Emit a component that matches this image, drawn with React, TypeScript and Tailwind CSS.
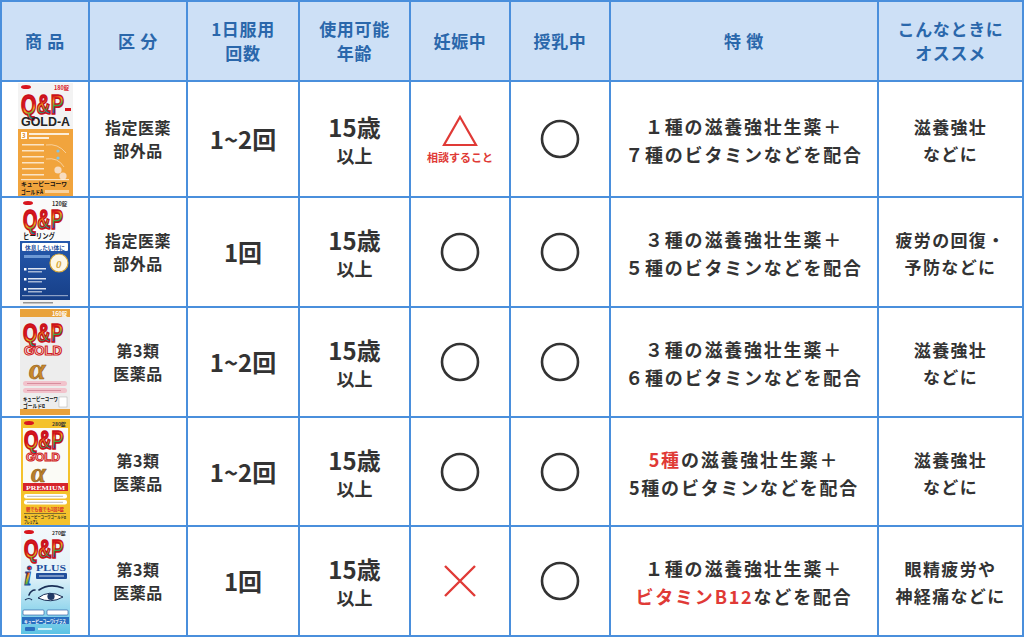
import React from "react";

const RED = "#e03a36";

// Q&P logo: condensed tall letters, squeezed with a transform so the box stays inside the pack
function QP({ x, y, w, size }: { x: number; y: number; w: number; size: number }) {
  const sx = w / (2.17 * size);
  return (
    <g transform={`translate(${x} ${y}) scale(${sx.toFixed(3)} 1)`}>
      <text
        x={0}
        y={0}
        fontSize={size}
        fontWeight={700}
        fontFamily="'Liberation Sans', Arial, sans-serif"
        fill="url(#rainbow)"
        stroke="#c8101a"
        strokeWidth={1.6}
      >
        Q&amp;P
      </text>
    </g>
  );
}

function Defs() {
  return (
    <defs>
      <linearGradient id="rainbow" x1="0" y1="0" x2="0.5" y2="1">
        <stop offset="0" stopColor="#d8151d" />
        <stop offset="0.5" stopColor="#d8151d" />
        <stop offset="0.62" stopColor="#f6b51a" />
        <stop offset="0.76" stopColor="#3aa84a" />
        <stop offset="0.9" stopColor="#1d5fb8" />
      </linearGradient>
      <linearGradient id="sky" x1="0" y1="0" x2="0" y2="1">
        <stop offset="0" stopColor="#f3f8fb" />
        <stop offset="0.45" stopColor="#e3f2f9" />
        <stop offset="1" stopColor="#5cc3e4" />
      </linearGradient>
      <linearGradient id="navy" x1="0" y1="0" x2="0" y2="1">
        <stop offset="0" stopColor="#2559ad" />
        <stop offset="1" stopColor="#173f87" />
      </linearGradient>
    </defs>
  );
}

const jp = "'Noto Sans CJK JP', sans-serif";

function GoldA() {
  return (
    <svg width="55" height="113" viewBox="0 0 55 113">
      <Defs />
      <rect width="55" height="113" fill="#f1a43d" />
      <rect width="55" height="46" fill="#f3f3f3" />
      <ellipse cx="8" cy="4" rx="5" ry="2" fill="#d8151d" />
      <text x="36" y="7" fontSize="5.5" fontWeight={700} fill="#d8151d" fontFamily={jp}>180錠</text>
      <QP x={3} y={31} w={43} size={28} />
      <rect x="47" y="25" width="6" height="3" fill="#d8151d" />
      <text x="3" y="43" fontSize="12" fontWeight={700} fill="#222" fontFamily="'Liberation Sans', sans-serif" textLength="49" lengthAdjust="spacingAndGlyphs">GOLD-A</text>
      <rect x="3" y="49" width="6" height="7" fill="#fff" />
      <text x="4" y="55" fontSize="6" fontWeight={700} fill="#e08a1a" fontFamily={jp}>3</text>
      <rect x="11" y="50" width="40" height="2" fill="#fff" opacity="0.8" />
      <rect x="11" y="54" width="20" height="2" fill="#fff" opacity="0.8" />
      {[61, 67, 73, 79, 85, 91].map((yy) => (
        <rect key={yy} x="4" y={yy} width="22" height="1.5" fill="#fff" opacity="0.7" />
      ))}
      <path d="M28 62 Q40 60 48 70 M28 76 Q40 74 46 84" stroke="#fff" strokeWidth="0.6" fill="none" opacity="0.8" />
      <circle cx="40" cy="68" r="1.6" fill="#7ec3e8" />
      <circle cx="40" cy="75" r="1.6" fill="#7ec3e8" />
      <circle cx="40" cy="87" r="3.6" fill="#f7dcc0" />
      <circle cx="45" cy="93" r="3.6" fill="#f7dcc0" />
      <rect x="3" y="96" width="48" height="1.2" fill="#fff" opacity="0.7" />
      <text x="3" y="103" fontSize="6" fontWeight={700} fill="#111" fontFamily={jp} textLength="46" lengthAdjust="spacingAndGlyphs">キューピーコーワ</text>
      <text x="3" y="110.5" fontSize="6" fontWeight={700} fill="#111" fontFamily={jp} textLength="22" lengthAdjust="spacingAndGlyphs">ゴールドA</text>
      <rect x="27" y="107" width="24" height="3" fill="#fff" opacity="0.5" />
    </svg>
  );
}

function Healing() {
  return (
    <svg width="50" height="107" viewBox="0 0 50 107">
      <Defs />
      <rect width="50" height="107" fill="#fafafa" />
      <ellipse cx="8" cy="4" rx="5" ry="2" fill="#d8151d" />
      <text x="32" y="7" fontSize="5.5" fontWeight={700} fill="#333" fontFamily={jp}>120錠</text>
      <QP x={3} y={30} w={40} size={27} />
      <text x="3" y="39.5" fontSize="7.5" fontWeight={700} fill="#1a1a1a" fontFamily={jp} textLength="32" lengthAdjust="spacingAndGlyphs">ヒーリング</text>
      <rect y="42" width="50" height="59" fill="url(#navy)" />
      <rect x="2" y="44" width="46" height="8" rx="1" fill="#fff" />
      <text x="5" y="50.5" fontSize="6" fontWeight={700} fill="#1f4e9c" fontFamily={jp} textLength="40" lengthAdjust="spacingAndGlyphs">休息したい体に</text>
      <rect x="4" y="56" width="26" height="3" fill="#8fb6e8" opacity="0.7" />
      <circle cx="39" cy="64" r="9" fill="#fdf7e6" stroke="#d8a83a" strokeWidth="1.2" />
      <text x="36" y="69" fontSize="11" fontStyle="italic" fontWeight={700} fill="#d8a83a" fontFamily="'Liberation Serif', serif">0</text>
      {[69, 79, 89].map((yy) => (
        <g key={yy}>
          <rect x="4" y={yy} width="2.5" height="2.5" fill="#fff" />
          <rect x="8" y={yy} width="18" height="1.5" fill="#fff" opacity="0.85" />
          <rect x="8" y={yy + 3} width="14" height="1.5" fill="#fff" opacity="0.6" />
        </g>
      ))}
      <rect x="2" y="96" width="46" height="1.2" fill="#fff" opacity="0.5" />
      <rect y="101" width="50" height="6" fill="#f1f1f1" />
      <rect x="3" y="103" width="30" height="1.5" fill="#555" opacity="0.6" />
    </svg>
  );
}

function GoldAlpha() {
  return (
    <svg width="50" height="106" viewBox="0 0 50 106">
      <Defs />
      <rect width="50" height="106" fill="#ededed" />
      <rect width="50" height="8" fill="#e9a23b" />
      <rect y="100" width="50" height="6" fill="#e9a23b" />
      <text x="32" y="6.5" fontSize="5.5" fontWeight={700} fill="#fff" fontFamily={jp}>160錠</text>
      <QP x={3} y={33} w={40} size={26} />
      <text x="4" y="46" fontSize="13" fontWeight={700} fill="#fff" stroke="#d01e24" strokeWidth="1.1" fontFamily="'Liberation Sans', sans-serif" textLength="38" lengthAdjust="spacingAndGlyphs">GOLD</text>
      <text x="9" y="70" fontSize="30" fontStyle="italic" fontWeight={700} fill="#c7892d" stroke="#8f5b1a" strokeWidth="0.6" fontFamily="'Liberation Serif', serif">α</text>
      <rect x="3" y="72" width="44" height="5" rx="2.5" fill="#f2c3cc" />
      <rect x="3" y="79" width="44" height="5" rx="2.5" fill="#f2c3cc" />
      <rect x="7" y="74" width="34" height="1" fill="#c56a80" opacity="0.6" />
      <rect x="7" y="81" width="34" height="1" fill="#c56a80" opacity="0.6" />
      <text x="3" y="92" fontSize="5.5" fontWeight={700} fill="#111" fontFamily={jp} textLength="35" lengthAdjust="spacingAndGlyphs">キューピーコーワ</text>
      <text x="3" y="98.5" fontSize="5.5" fontWeight={700} fill="#111" fontFamily={jp} textLength="22" lengthAdjust="spacingAndGlyphs">ゴールドα</text>
      <rect x="39" y="88" width="8" height="10" fill="#fff" stroke="#999" strokeWidth="0.4" />
    </svg>
  );
}

function Premium() {
  return (
    <svg width="49" height="106" viewBox="0 0 49 106">
      <Defs />
      <rect width="49" height="106" fill="#f4c22c" />
      <rect x="2" y="9" width="45" height="56" fill="#fbfbf6" />
      <ellipse cx="8" cy="4" rx="5" ry="2" fill="#d8151d" />
      <text x="31" y="7" fontSize="5" fontWeight={700} fill="#333" fontFamily={jp}>280錠</text>
      <QP x={3} y={30} w={40} size={25} />
      <text x="5" y="42" fontSize="11" fontWeight={700} fill="#fff" stroke="#d01e24" strokeWidth="1" fontFamily="'Liberation Sans', sans-serif" textLength="34" lengthAdjust="spacingAndGlyphs">GOLD</text>
      <text x="10" y="63" fontSize="27" fontStyle="italic" fontWeight={700} fill="#b9812b" stroke="#8f5b1a" strokeWidth="0.6" fontFamily="'Liberation Serif', serif">α</text>
      <rect x="2" y="64" width="45" height="8" fill="#d6242b" />
      <text x="5" y="70.5" fontSize="6.5" fontWeight={700} fill="#fff" fontFamily="'Liberation Serif', serif" textLength="39" lengthAdjust="spacingAndGlyphs">PREMIUM</text>
      <rect x="3" y="75" width="43" height="4.5" rx="2" fill="#fff" />
      <rect x="3" y="81" width="43" height="4.5" rx="2" fill="#fff" />
      <rect x="6" y="76.8" width="36" height="1" fill="#888" opacity="0.6" />
      <rect x="6" y="82.8" width="36" height="1" fill="#888" opacity="0.6" />
      <text x="5" y="91.5" fontSize="4.5" fontWeight={700} fill="#d6242b" fontFamily={jp} textLength="38" lengthAdjust="spacingAndGlyphs">朝でも夜でも1回1錠</text>
      <rect x="3" y="94" width="42" height="1" fill="#333" opacity="0.6" />
      <text x="3" y="99.5" fontSize="4" fontWeight={700} fill="#222" fontFamily={jp} textLength="42" lengthAdjust="spacingAndGlyphs">キューピーコーワゴールドα</text>
      <text x="3" y="104.5" fontSize="4" fontWeight={700} fill="#222" fontFamily={jp} textLength="14" lengthAdjust="spacingAndGlyphs">プレミアム</text>
    </svg>
  );
}

function IPlus() {
  return (
    <svg width="49" height="106" viewBox="0 0 49 106">
      <Defs />
      <rect width="49" height="106" fill="url(#sky)" />
      <ellipse cx="8" cy="4" rx="5" ry="2" fill="#d8151d" />
      <text x="31" y="7" fontSize="5" fontWeight={700} fill="#333" fontFamily={jp}>270錠</text>
      <QP x={3} y={30} w={40} size={25} />
      <text x="3" y="57" fontSize="27" fontStyle="italic" fontWeight={700} fill="url(#rainbow)" stroke="#1d4f9e" strokeWidth="0.9" fontFamily="'Liberation Serif', serif">i</text>
      <text x="15" y="43" fontSize="9" fontWeight={700} fill="#1f4e9c" fontFamily="'Liberation Serif', serif" textLength="30" lengthAdjust="spacingAndGlyphs">PLUS</text>
      <rect x="15" y="45" width="31" height="6" rx="1" fill="#1f4e9c" />
      <rect x="18" y="47.5" width="25" height="1" fill="#fff" opacity="0.8" />
      <path d="M8 67 Q10 62 14 62 M18 62 Q28 55 42 60" stroke="#1b2f57" strokeWidth="1.6" fill="none" strokeLinecap="round" />
      <path d="M17 70 Q28 61 42 69 Q30 76 17 70 Z" fill="#fff" stroke="#1b2f57" strokeWidth="1" />
      <circle cx="30" cy="68.5" r="3.6" fill="#223a66" />
      <path d="M4 72 Q8 69 11 72" stroke="#1b2f57" strokeWidth="1.2" fill="none" />
      <rect x="2" y="82" width="21" height="5" rx="1" fill="#fff" stroke="#1f4e9c" strokeWidth="0.6" />
      <rect x="26" y="82" width="21" height="5" rx="1" fill="#fff" stroke="#1f4e9c" strokeWidth="0.6" />
      <rect x="1" y="89" width="47" height="7" fill="#2a6fc0" />
      <text x="3" y="94.5" fontSize="4.5" fontWeight={700} fill="#fff" fontFamily={jp} textLength="42" lengthAdjust="spacingAndGlyphs">キューピーコーワiプラス</text>
      <rect x="4" y="99" width="10" height="4" rx="1" fill="#2a6fc0" />
      <rect x="17" y="100" width="14" height="2" fill="#fff" opacity="0.7" />
    </svg>
  );
}

type Row = {
  img: React.ReactNode;
  kind: [string, string];
  times: string;
  preg: "tri" | "ok" | "ng";
  feature: React.ReactNode;
  rec: [string, string];
};

const rows: Row[] = [
  {
    img: <GoldA />,
    kind: ["指定医薬", "部外品"],
    times: "1~2回",
    preg: "tri",
    feature: (
      <>
        <span className="block">１種の滋養強壮生薬＋</span>
        <span className="block">７種のビタミンなどを配合</span>
      </>
    ),
    rec: ["滋養強壮", "などに"],
  },
  {
    img: <Healing />,
    kind: ["指定医薬", "部外品"],
    times: "1回",
    preg: "ok",
    feature: (
      <>
        <span className="block">３種の滋養強壮生薬＋</span>
        <span className="block">５種のビタミンなどを配合</span>
      </>
    ),
    rec: ["疲労の回復・", "予防などに"],
  },
  {
    img: <GoldAlpha />,
    kind: ["第3類", "医薬品"],
    times: "1~2回",
    preg: "ok",
    feature: (
      <>
        <span className="block">３種の滋養強壮生薬＋</span>
        <span className="block">６種のビタミンなどを配合</span>
      </>
    ),
    rec: ["滋養強壮", "などに"],
  },
  {
    img: <Premium />,
    kind: ["第3類", "医薬品"],
    times: "1~2回",
    preg: "ok",
    feature: (
      <>
        <span className="block">
          <span className="text-[#e03a36]">5種</span>の滋養強壮生薬＋
        </span>
        <span className="block">5種のビタミンなどを配合</span>
      </>
    ),
    rec: ["滋養強壮", "などに"],
  },
  {
    img: <IPlus />,
    kind: ["第3類", "医薬品"],
    times: "1回",
    preg: "ng",
    feature: (
      <>
        <span className="block">１種の滋養強壮生薬＋</span>
        <span className="block">
          <span className="text-[#e03a36]">ビタミンB12</span>などを配合
        </span>
      </>
    ),
    rec: ["眼精疲労や", "神経痛などに"],
  },
];

function Circle() {
  return (
    <svg width="40" height="40" viewBox="0 0 40 40">
      <circle cx="20" cy="20" r="18" fill="none" stroke="#333" strokeWidth="2.6" />
    </svg>
  );
}

function Triangle() {
  return (
    <div className="flex flex-col items-center">
      <svg width="36" height="32" viewBox="0 0 36 32">
        <path d="M18 2 L34 30 L2 30 Z" fill="none" stroke={RED} strokeWidth="2.2" />
      </svg>
      <span className="mt-[3px] text-[11px] leading-[14px] font-bold text-[#e03a36]">相談すること</span>
    </div>
  );
}

function Cross() {
  return (
    <svg width="34" height="34" viewBox="0 0 34 34">
      <path d="M2 2 L32 32 M32 2 L2 32" stroke={RED} strokeWidth="2.4" />
    </svg>
  );
}

function Head({ children }: { children: React.ReactNode }) {
  return (
    <div className="bg-[#cde0f6] flex items-center justify-center text-center text-[17px] leading-[24px] font-bold tracking-[0.04em] text-[#2a67ab]">
      <div>{children}</div>
    </div>
  );
}

function Cell({ children }: { children: React.ReactNode }) {
  return <div className="bg-white flex items-center justify-center text-center text-[#333]">{children}</div>;
}

export default function App() {
  return (
    <div className="w-[1024px] h-[637px] bg-white font-['Noto_Sans_CJK_JP','Noto_Sans',sans-serif]">
      <div className="grid grid-cols-[86px_96px_110px_109px_98px_98px_266px_143px] grid-rows-[78px_114px_108px_108px_107px_108px] gap-[2px] p-[2px] bg-[#4a8fdc]">
        <Head>商 品</Head>
        <Head>区 分</Head>
        <Head>
          <span className="block">1日服用</span>
          <span className="block">回数</span>
        </Head>
        <Head>
          <span className="block">使用可能</span>
          <span className="block">年齢</span>
        </Head>
        <Head>妊娠中</Head>
        <Head>授乳中</Head>
        <Head>特 徴</Head>
        <Head>
          <span className="block">こんなときに</span>
          <span className="block">オススメ</span>
        </Head>

        {rows.map((r, i) => (
          <React.Fragment key={i}>
            <div className="bg-white flex items-center justify-center">{r.img}</div>
            <Cell>
              <div className="text-[16px] leading-[23px] font-bold tracking-[0.03em]">
                <span className="block">{r.kind[0]}</span>
                <span className="block">{r.kind[1]}</span>
              </div>
            </Cell>
            <Cell>
              <span className="text-[24px] font-bold">{r.times}</span>
            </Cell>
            <Cell>
              <div className="font-bold pt-[2px]">
                <span className="block text-[24px] leading-[30px]">15歳</span>
                <span className="block text-[18px] leading-[26px]">以上</span>
              </div>
            </Cell>
            <Cell>{r.preg === "tri" ? <Triangle /> : r.preg === "ng" ? <Cross /> : <Circle />}</Cell>
            <Cell>
              <Circle />
            </Cell>
            <Cell>
              <div className="text-[18px] leading-[28px] font-bold tracking-[0.1em] pt-[2px]">{r.feature}</div>
            </Cell>
            <Cell>
              <div className="text-[17px] leading-[27px] font-bold tracking-[0.08em] pt-[2px]">
                <span className="block">{r.rec[0]}</span>
                <span className="block">{r.rec[1]}</span>
              </div>
            </Cell>
          </React.Fragment>
        ))}
      </div>
    </div>
  );
}
